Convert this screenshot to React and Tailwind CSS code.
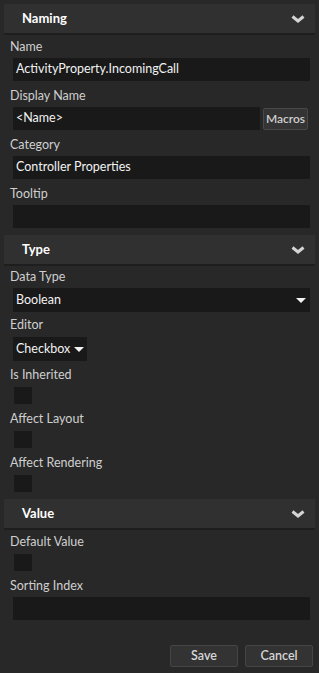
import React from 'react';

const font = { fontFamily: '"Segoe UI", Lato, "Noto Sans", sans-serif' };

const Chevron = () => (
  <svg width="14" height="8" viewBox="0 0 14 8" className="mr-[10px]">
    <polyline points="1.5,1.5 7,6 12.5,1.5" fill="none" stroke="#d4d4d4" strokeWidth="3" strokeLinejoin="miter" />
  </svg>
);

const Caret = () => (
  <svg width="10" height="5" viewBox="0 0 10 5">
    <polygon points="0,0 10,0 5,5" fill="#f2f2f2" />
  </svg>
);

const SectionHeader = ({ title }) => (
  <div className="mx-1 h-[31px] flex items-center justify-between bg-[#303030] border-b-2 border-[#1e1e1e]">
    <span className="pl-[18px] text-[13px] font-bold text-white">{title}</span>
    <Chevron />
  </div>
);

const Label = ({ children }) => (
  <div className="pl-[10px] h-[18px] leading-[18px] text-[12.5px] text-[#cfcfcf]">{children}</div>
);

const TextField = ({ label, value, className = '' }) => (
  <div className={`mb-[6px] ${className}`}>
    <Label>{label}</Label>
    <div className="mt-[2px] ml-[13px] mr-[9px] h-[23px] bg-[#191919] flex items-center px-[3px] text-[12.5px] text-[#f2f2f2]">
      {value}
    </div>
  </div>
);

const CheckField = ({ label }) => (
  <div className="mb-[6px]">
    <Label>{label}</Label>
    <div className="mt-[3px] ml-[14px] w-[18px] h-[17px] bg-[#191919]" />
  </div>
);

const App = () => {
  return (
    <div className="w-[319px] h-[673px] bg-[#282828] pt-1 flex flex-col" style={font}>
      <SectionHeader title="Naming" />
      <div className="pt-[3px]">
        <TextField label="Name" value="ActivityProperty.IncomingCall" />
        <div className="mb-[6px]">
          <Label>Display Name</Label>
          <div className="mt-[2px] flex items-center">
            <div className="ml-[13px] w-[247px] h-[23px] bg-[#191919] flex items-center px-[3px] text-[12.5px] text-[#f2f2f2]">
              &lt;Name&gt;
            </div>
            <button className="ml-[3px] w-[45px] h-[22px] bg-[#343434] border border-[#484848] rounded-[2px] text-[12px] font-semibold text-[#cfcfcf] leading-none">
              Macros
            </button>
          </div>
        </div>
        <TextField label="Category" value="Controller Properties" />
        <TextField label="Tooltip" value="" className="mb-[7px]" />
      </div>

      <SectionHeader title="Type" />
      <div className="pt-[2px]">
        <div className="mb-[4px]">
          <Label>Data Type</Label>
          <div className="mt-[2px] ml-[13px] mr-[9px] h-[24px] bg-[#191919] flex items-center justify-between pl-[3px] pr-[4px] text-[12.5px] text-[#f2f2f2]">
            <span>Boolean</span>
            <Caret />
          </div>
        </div>
        <div className="mb-[5px]">
          <Label>Editor</Label>
          <div className="mt-[3px] ml-[13px] w-[74px] h-[24px] bg-[#191919] flex items-center justify-between pl-[3px] pr-[3px] text-[12.5px] text-[#f2f2f2]">
            <span>Checkbox</span>
            <Caret />
          </div>
        </div>
        <CheckField label="Is Inherited" />
        <CheckField label="Affect Layout" />
        <CheckField label="Affect Rendering" />
      </div>

      <div className="mt-[1px]">
        <SectionHeader title="Value" />
      </div>
      <div className="pt-[3px]">
        <CheckField label="Default Value" />
        <TextField label="Sorting Index" value="" />
      </div>

      <div className="mt-auto mb-[6px] flex justify-end gap-[7px] pr-[6px]">
        <button className="w-[68px] h-[22px] bg-[#333333] border border-[#454545] rounded-[2px] text-[12.5px] font-semibold text-[#d6d6d6]">
          Save
        </button>
        <button className="w-[68px] h-[22px] bg-[#333333] border border-[#454545] rounded-[2px] text-[12.5px] font-semibold text-[#d6d6d6]">
          Cancel
        </button>
      </div>
    </div>
  );
};

export default App;
